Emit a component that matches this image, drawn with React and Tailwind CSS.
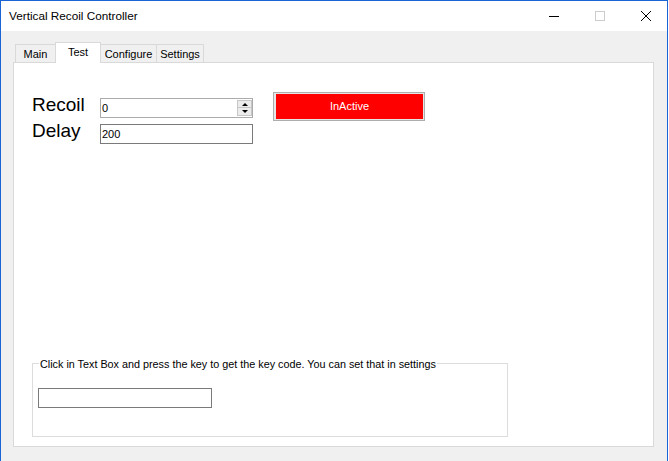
function SpinButtons() {
  return (
    <div className="flex flex-col w-[15px] h-[16px] my-[1px] gap-0">
      <div className="h-[8px] bg-[#ececec] border border-[#c6c6c6] flex items-center justify-center">
        <div className="w-0 h-0 border-x-[3px] border-x-transparent border-b-[3px] border-b-black" />
      </div>
      <div className="h-[8px] bg-[#ececec] border border-[#c6c6c6] border-t-0 flex items-center justify-center">
        <div className="w-0 h-0 border-x-[3px] border-x-transparent border-t-[3px] border-t-black" />
      </div>
    </div>
  );
}

function App() {
  let tabs = [
    { name: "Main", w: "w-[41px]" },
    { name: "Test", w: "w-[46px]", active: true },
    { name: "Configure", w: "w-[57px]" },
    { name: "Settings", w: "w-[48px]" },
  ];

  return (
    <div className="w-[669px] h-[461px] bg-white overflow-hidden font-['Liberation_Sans',Arial,sans-serif] text-black">
      {/* window */}
      <div className="w-[668px] h-[461px] border-l border-t border-r border-[#1a64d6] bg-[#f0f0f0] flex flex-col">
        {/* title bar */}
        <div className="h-[30px] bg-white flex items-center justify-between shrink-0">
          <span className="pl-[8px] text-[11.75px] leading-[14px]">Vertical Recoil Controller</span>
          <div className="flex h-full -mr-[2px]">
            <div className="w-[46px] h-full flex items-center justify-center">
              <div className="w-[10px] h-px bg-black" />
            </div>
            <div className="w-[46px] h-full flex items-center justify-center">
              <div className="w-[10px] h-[10px] border border-[#cccccc]" />
            </div>
            <div className="w-[46px] h-full flex items-center justify-center">
              <svg width="10" height="10" viewBox="0 0 10 10">
                <path d="M0 0L10 10M10 0L0 10" stroke="#000" strokeWidth="1" />
              </svg>
            </div>
          </div>
        </div>

        {/* body */}
        <div className="pl-[12px] pt-[11px] flex flex-col">
          {/* tabs */}
          <div className="flex items-end h-[20px] pl-[2px]">
            {tabs.map((tab, i) => (
              <div
                key={tab.name}
                className={`${tab.w} ${i > 0 ? "-ml-px" : ""} border-l border-t border-r border-[#d9d9d9] text-[11px] leading-[13px] text-center ${
                  tab.active
                    ? "h-[21px] -mb-px bg-white relative z-10 pt-[3px]"
                    : "h-[18px] bg-[#f0f0f0] pt-[3px]"
                }`}
              >
                {tab.name}
              </div>
            ))}
          </div>

          {/* tab page */}
          <div className="w-[641px] h-[385px] border border-[#d9d9d9] bg-white flex flex-col">
            <div className="flex items-start pt-[29px] pl-[18px]">
              <div className="flex flex-col gap-[6px] mt-[6px]">
                <div className="flex">
                  <div className="w-[68px] h-[20px] text-[19px] leading-[13px]">Recoil</div>
                  <div className="w-[153px] h-[20px] border border-[#ababab] flex items-center justify-between">
                    <span className="pl-[1px] text-[11px] leading-[13px]">0</span>
                    <SpinButtons />
                  </div>
                </div>
                <div className="flex">
                  <div className="w-[68px] h-[20px] text-[19px] leading-[13px]">Delay</div>
                  <div className="w-[153px] h-[20px] border border-[#7a7a7a] flex items-center">
                    <span className="pl-[1px] text-[11px] leading-[13px]">200</span>
                  </div>
                </div>
              </div>

              {/* toggle button */}
              <div className="ml-[20px] w-[152px] h-[29px] border border-[#adadad] bg-[#e5e5e5] p-[1px] pl-[2px]">
                <div className="w-full h-full bg-[#ff0000] flex items-center justify-center text-white text-[11px] leading-[13px]">
                  InActive
                </div>
              </div>
            </div>

            {/* key code group */}
            <div className="mt-auto mb-[9px] ml-[18px] w-[476px] h-[74px] border border-[#dcdcdc] relative">
              <span className="absolute left-[6px] top-[-6px] px-[1px] bg-white text-[10.8px] leading-[13px]">
                Click in Text Box and press the key to get the key code. You can set that in settings
              </span>
              <div className="ml-[5px] mt-[24px] w-[174px] h-[20px] border border-[#7a7a7a]" />
            </div>
          </div>
        </div>
      </div>
    </div>
  );
}

export default App;
